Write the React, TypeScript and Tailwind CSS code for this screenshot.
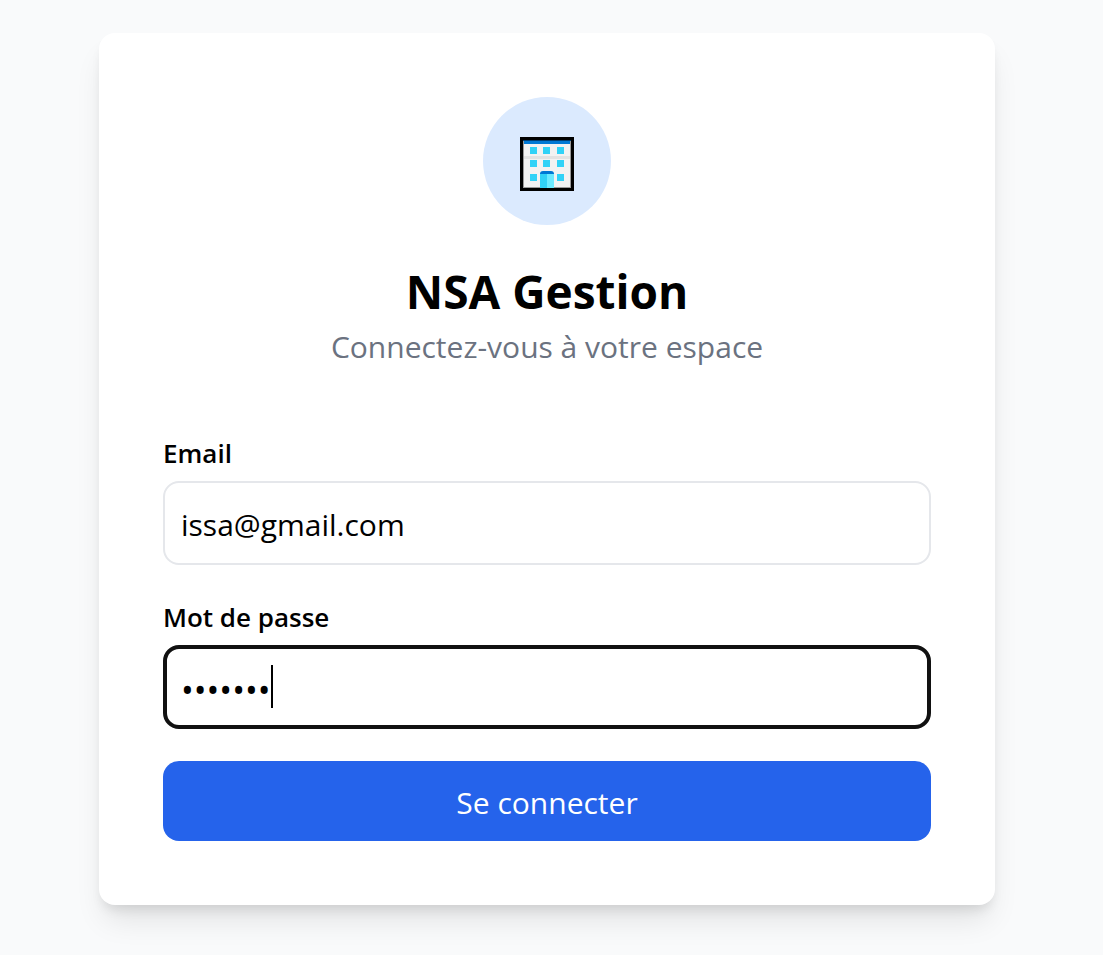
import { useState } from "react";

function BuildingIcon() {
  return (
    <svg viewBox="0 0 54 54" className="mt-1.5 h-[54px] w-[54px]" shapeRendering="crispEdges" aria-hidden="true">
      <rect width="54" height="54" fill="#000" />
      <rect x="3" y="3" width="48" height="48" fill="#9a9a9a" />
      <rect x="4" y="4" width="46" height="46" fill="#f2f2f2" />
      <rect x="3" y="3" width="48" height="1" fill="#003e73" />
      <rect x="4" y="4" width="46" height="3" fill="#0078d4" />
      <rect x="4" y="19" width="46" height="3" fill="#e2e2e2" />
      {[10, 23, 37].map((x) =>
        [10, 23, 37].map((y) =>
          x === 23 && y === 37 ? null : (
            <rect key={`${x}-${y}`} x={x} y={y} width="7" height="7" fill="#31d2f7" />
          ),
        ),
      )}
      <rect x="20" y="36" width="7" height="15" fill="#31d2f7" />
      <rect x="27" y="36" width="7" height="15" fill="#6ceaff" />
      <path d="M20 37q0-3 3-3h8q3 0 3 3z" fill="#0078d4" shapeRendering="auto" />
    </svg>
  );
}

export default function App() {
  const [email, setEmail] = useState("issa@gmail.com");
  const [password, setPassword] = useState("gestion");

  return (
    <main className="flex min-h-screen items-start justify-center bg-[#f9fafb] pt-[33px] pr-[9px] pb-[50px] font-['Segoe_UI','Open_Sans',sans-serif] text-black">
      <section className="w-full max-w-[896px] rounded-2xl bg-white p-16 shadow-[0_20px_30px_-6px_rgba(0,0,0,0.1),0_8px_12px_-4px_rgba(0,0,0,0.1)]">
        <header className="mb-16 flex flex-col items-center text-center">
          <div className="mb-8 flex size-32 items-center justify-center rounded-full bg-[#dbeafe]">
            <BuildingIcon />
          </div>
          <h1 className="text-[46px] leading-[68px] font-bold">NSA Gestion</h1>
          <p className="text-[30px] leading-[44px] text-[#6b7280]">Connectez-vous à votre espace</p>
        </header>
        <form className="flex flex-col gap-8" onSubmit={(e) => e.preventDefault()}>
          <div className="flex flex-col gap-2">
            <label htmlFor="email" className="text-[26px] leading-10 font-semibold">
              Email
            </label>
            <input
              id="email"
              type="email"
              value={email}
              onChange={(e) => setEmail(e.target.value)}
              className="h-[84px] w-full rounded-2xl border-2 border-[#e5e7eb] px-4 pt-0.5 text-[30px] outline-none"
            />
          </div>
          <div className="flex flex-col gap-2">
            <label htmlFor="password" className="text-[26px] leading-10 font-semibold">
              Mot de passe
            </label>
            <div className="relative">
              <input
                id="password"
                type="password"
                value={password}
                onChange={(e) => setPassword(e.target.value)}
                className="block h-[84px] w-full rounded-2xl border-4 border-[#111111] px-3.5 pt-1.5 text-[34px] caret-transparent outline-none"
              />
              <span aria-hidden="true" className="absolute top-5 left-[108px] h-[43px] w-0.5 bg-black" />
            </div>
          </div>
          <button type="submit" className="h-20 rounded-2xl bg-[#2563eb] pt-0.5 text-[30px] text-white">
            Se connecter
          </button>
        </form>
      </section>
    </main>
  );
}
